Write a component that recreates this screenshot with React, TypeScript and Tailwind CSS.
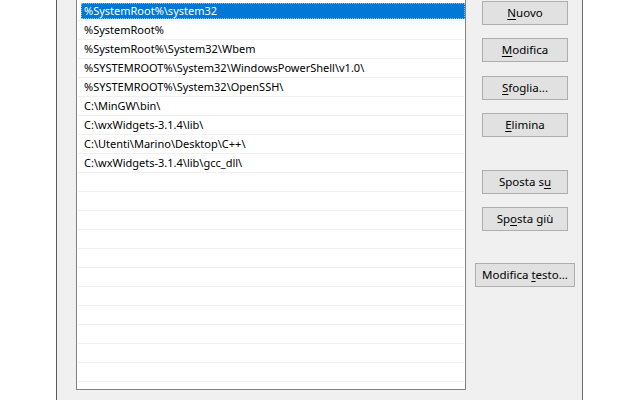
import React from "react";

const paths = [
  "%SystemRoot%\\system32",
  "%SystemRoot%",
  "%SystemRoot%\\System32\\Wbem",
  "%SYSTEMROOT%\\System32\\WindowsPowerShell\\v1.0\\",
  "%SYSTEMROOT%\\System32\\OpenSSH\\",
  "C:\\MinGW\\bin\\",
  "C:\\wxWidgets-3.1.4\\lib\\",
  "C:\\Utenti\\Marino\\Desktop\\C++\\",
  "C:\\wxWidgets-3.1.4\\lib\\gcc_dll\\",
];

const rows = [...paths, ...Array(12).fill("")];

function Btn({ children, className = "" }: { children: React.ReactNode; className?: string }) {
  return (
    <button className={`h-[24px] w-[86px] shrink-0 border border-[#adadad] bg-[#e1e1e1] text-[11.5px] leading-none text-black ${className}`}>
      {children}
    </button>
  );
}

export default function App() {
  return (
    <div
      className="w-[640px] h-[400px] bg-white flex overflow-hidden"
      style={{ fontFamily: '"Noto Sans", "Open Sans", sans-serif' }}
    >
      <div className="w-[56px] shrink-0" />
      <div className="w-[527px] h-full shrink-0 bg-[#f0f0f0] border-l border-r border-l-[#5a5a5a] border-r-[#6d6d6d] flex pl-[19px]">
        {/* list of path entries */}
        <div className="w-[390px] h-[391px] -mt-px shrink-0 border border-[#828282] bg-white pt-[2px] overflow-hidden">
          {rows.map((p, i) => (
            <div key={i} className="h-[19px] mx-px border-b border-[#f0f0f0] flex">
              {i === 0 ? (
                <div className="ml-[3px] -mr-px mt-px flex-1 h-[16px] bg-[#0078d7] border border-dotted border-[#8ec2ec] flex items-center pl-[2px] text-[11px] text-white whitespace-nowrap">
                  {p}
                </div>
              ) : (
                <div className="flex-1 flex items-center pl-[6px] text-[11px] text-black whitespace-nowrap">
                  {p}
                </div>
              )}
            </div>
          ))}
        </div>

        {/* buttons */}
        <div className="ml-[16px] w-[86px] flex flex-col items-center pt-px">
          <Btn><u className="underline-offset-2">N</u>uovo</Btn>
          <Btn className="mt-[13px]"><u className="underline-offset-2">M</u>odifica</Btn>
          <Btn className="mt-[14px]"><u className="underline-offset-2">S</u>foglia...</Btn>
          <Btn className="mt-[13px]"><u className="underline-offset-2">E</u>limina</Btn>
          <Btn className="mt-[33px]">Sposta s<u className="underline-offset-2">u</u></Btn>
          <Btn className="mt-[13px]">Sp<u className="underline-offset-2">o</u>sta giù</Btn>
          <Btn className="mt-[32px] w-[100px]">Modifica <u className="underline-offset-2">t</u>esto...</Btn>
        </div>
      </div>
    </div>
  );
}
